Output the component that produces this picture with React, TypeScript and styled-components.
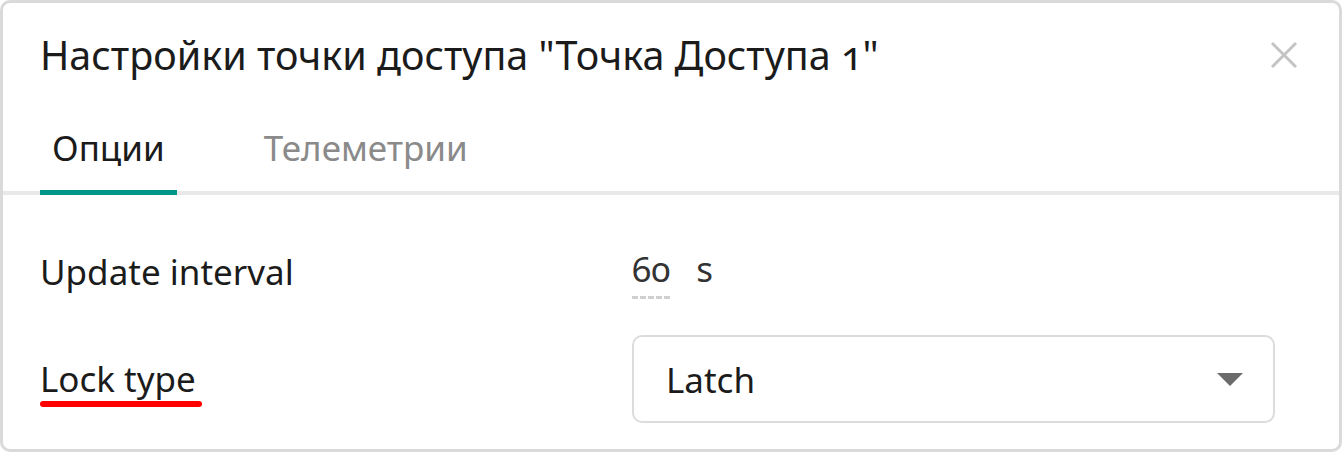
import React, { FC, useState } from 'react';
import styled, { createGlobalStyle } from 'styled-components';

const GlobalStyle = createGlobalStyle`
  html, body {
    margin: 0;
    padding: 0;
    background: #ffffff;
  }
  body {
    font-family: 'Noto Sans', 'Open Sans', sans-serif;
    color: #1b1b1b;
  }
`;

const Dialog = styled.div`
  box-sizing: border-box;
  width: 1342px;
  height: 452px;
  border: 3px solid #dadada;
  border-radius: 10px;
  background: #fff;
  display: flex;
  flex-direction: column;
  overflow: hidden;
`;

const Header = styled.div`
  display: flex;
  align-items: center;
  justify-content: space-between;
  padding: 22px 41px 0 37px;
  height: 62px;
`;

const Title = styled.h1`
  margin: 0;
  font-size: 39.5px;
  font-weight: 400;
  line-height: 1.2;
  font-variant-numeric: oldstyle-nums;
`;

const CloseButton = styled.button`
  border: 0;
  background: none;
  padding: 0;
  margin-top: -2px;
  width: 28px;
  height: 28px;
  display: flex;
  cursor: pointer;
  color: #c4c4c4;
`;

const Tabs = styled.div`
  display: flex;
  gap: 75px;
  padding: 0 37px;
  margin-top: 40px;
  border-bottom: 4px solid #e9e9e9;
`;

const Tab = styled.div<{ $active?: boolean }>`
  position: relative;
  padding: 0 12px 22px;
  font-size: 35px;
  line-height: 1.2;
  color: ${p => (p.$active ? '#1b1b1b' : '#8a8a8a')};
  cursor: pointer;

  &::after {
    content: '';
    position: absolute;
    left: 0;
    right: 0;
    bottom: -4px;
    height: 5px;
    background: ${p => (p.$active ? '#009688' : 'transparent')};
  }
`;

const Form = styled.div`
  display: flex;
  flex-direction: column;
  padding: 45px 64px 0 37px;
`;

const Row = styled.div`
  display: grid;
  grid-template-columns: 592px 1fr;
  align-items: center;
  min-height: 64px;
  & + & {
    margin-top: 31px;
  }
`;

const Label = styled.div<{ $error?: boolean }>`
  font-size: 35px;
  line-height: 1.2;
  justify-self: start;
  position: relative;
  ${p =>
    p.$error &&
    `
    &::after {
      content: '';
      position: absolute;
      left: 0;
      right: -6px;
      bottom: -7px;
      height: 6px;
      border-radius: 3px;
      background: #ff0000;
    }
  `}
`;

const ValueLine = styled.div`
  display: flex;
  align-items: baseline;
  gap: 26px;
  font-size: 35px;
`;

const NumberValue = styled.span`
  color: #333;
  font-variant-numeric: oldstyle-nums;
  border-bottom: 3px dashed #d0d0d0;
  padding-bottom: 4px;
`;

const Unit = styled.span`
  color: #333;
`;

const Select = styled.div`
  box-sizing: border-box;
  height: 88px;
  border: 2px solid #dcdcdc;
  border-radius: 10px;
  display: flex;
  align-items: center;
  justify-content: space-between;
  padding: 0 30px 0 32px;
  font-size: 35px;
  cursor: pointer;
`;

const Caret = styled.span`
  width: 0;
  height: 0;
  border-left: 13px solid transparent;
  border-right: 13px solid transparent;
  border-top: 13px solid #6b6b6b;
`;

const App: FC = () => {
  const [tab, setTab] = useState(0);

  return (
    <>
      <GlobalStyle />
      <Dialog>
        <Header>
          <Title>Настройки точки доступа "Точка Доступа 1"</Title>
          <CloseButton aria-label="Закрыть">
            <svg width="28" height="28" viewBox="0 0 28 28">
              <path d="M2 2 L26 26 M26 2 L2 26" stroke="currentColor" strokeWidth="3" />
            </svg>
          </CloseButton>
        </Header>
        <Tabs>
          <Tab $active={tab === 0} onClick={() => setTab(0)}>
            Опции
          </Tab>
          <Tab $active={tab === 1} onClick={() => setTab(1)}>
            Телеметрии
          </Tab>
        </Tabs>
        <Form>
          <Row>
            <Label>Update interval</Label>
            <ValueLine>
              <NumberValue>60</NumberValue>
              <Unit>s</Unit>
            </ValueLine>
          </Row>
          <Row>
            <Label $error>Lock type</Label>
            <Select>
              <span>Latch</span>
              <Caret />
            </Select>
          </Row>
        </Form>
      </Dialog>
    </>
  );
};

export default App;
